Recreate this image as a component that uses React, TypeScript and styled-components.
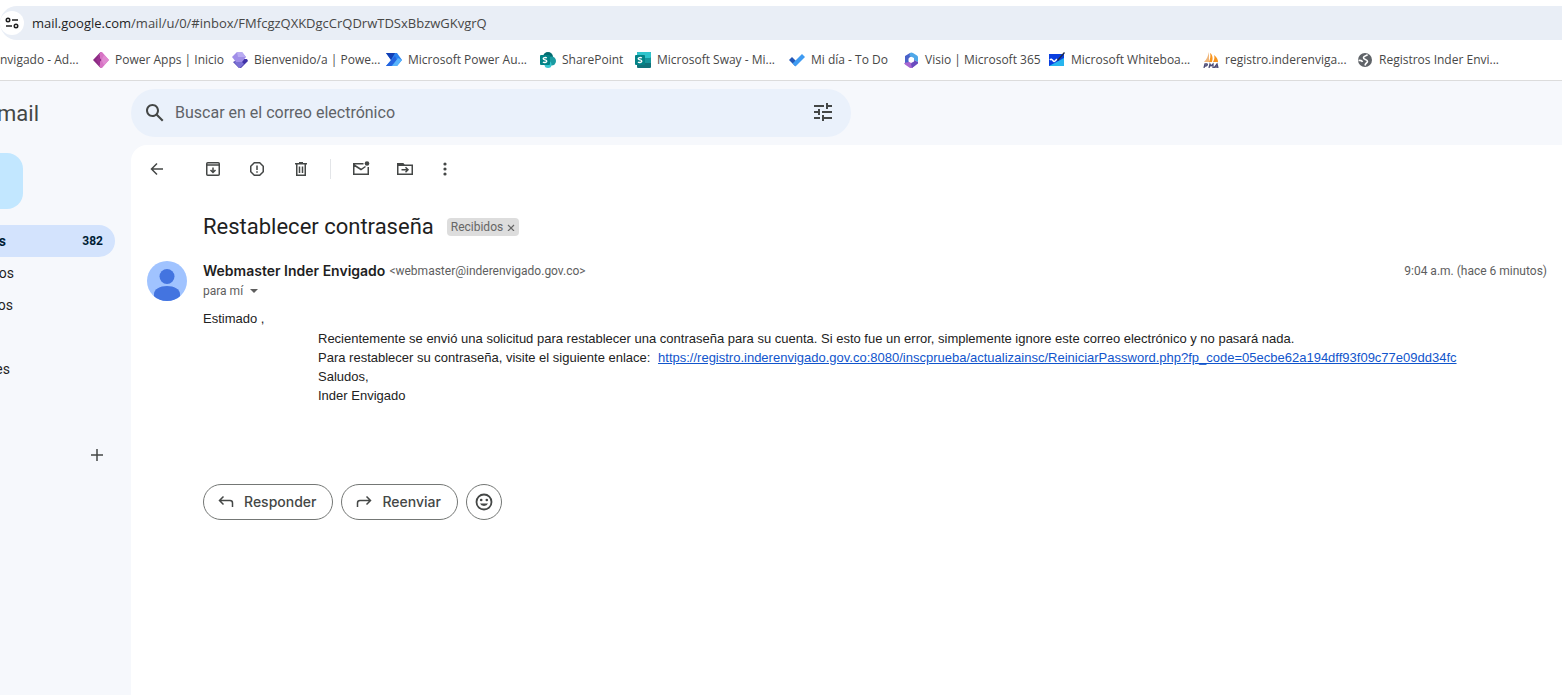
import React from "react";
import styled, { createGlobalStyle } from "styled-components";

const GlobalStyle = createGlobalStyle`
  *, *::before, *::after { box-sizing: border-box; }
  body {
    margin: 0;
    background: #f6f8fc;
    color: #1f1f1f;
    font-family: Roboto, "Liberation Sans", sans-serif;
    overflow-x: hidden;
  }
  button { font: inherit; color: inherit; border: 0; background: none; padding: 0; cursor: pointer; }
  svg { display: block; flex: none; }
  h1, h2, p { margin: 0; font-weight: 400; }
`;

const Page = styled.div`
  min-height: 100vh;
  display: flex;
  flex-direction: column;
`;

const BrowserBar = styled.header`
  background: #fff;
  padding-top: 6px;
  border-bottom: 1px solid #dcdcdc;
  font-family: "Open Sans", "Noto Sans", sans-serif;
`;

const AddressBar = styled.div`
  display: flex;
  align-items: center;
  height: 34px;
  background: #e9eef6;
  border-radius: 17px 0 0 17px;
`;

const SiteInfo = styled.button`
  width: 24px;
  height: 24px;
  border-radius: 12px;
  background: #fff;
  display: grid;
  place-items: center;
`;

const Address = styled.div`
  margin-left: 8px;
  font-size: 13px;
  line-height: 20px;
  color: #474747;
  white-space: nowrap;
  b { font-weight: 400; color: #1f1f1f; }
`;

const Bookmarks = styled.nav`
  display: flex;
  align-items: center;
  height: 40px;
  overflow: hidden;
`;

const Bookmark = styled.a<{ $width: number }>`
  display: flex;
  align-items: center;
  gap: 6px;
  flex: none;
  width: ${(p) => p.$width}px;
  font-size: 12px;
  line-height: 16px;
  color: #474747;
  text-decoration: none;
  white-space: nowrap;
`;

const Workspace = styled.div`
  flex: 1;
  display: grid;
  grid-template-columns: 131px minmax(0, 1fr);
  grid-template-rows: 64px 1fr;
`;

const Brand = styled.div`
  display: flex;
  align-items: center;
  justify-content: flex-end;
  width: 39px;
  padding-top: 2px;
  overflow: hidden;
  font-size: 22px;
  line-height: 24px;
  color: #444746;
`;

const SearchRow = styled.div`
  padding: 8px 0;
`;

const SearchBox = styled.form`
  display: flex;
  align-items: center;
  max-width: 720px;
  height: 48px;
  padding: 0 16px 0 12px;
  border-radius: 24px;
  background: #eaf1fb;
  color: #444746;
`;

const SearchInput = styled.input`
  flex: 1;
  min-width: 0;
  margin-left: 8px;
  border: 0;
  padding: 0;
  outline: 0;
  background: none;
  font: 16px/24px Roboto, "Liberation Sans", sans-serif;
  &::placeholder { color: #5f6368; opacity: 1; }
`;

const Sidebar = styled.aside`
  padding: 8px 16px 0 0;
`;

const Compose = styled.button`
  display: block;
  width: 23px;
  height: 56px;
  border-radius: 0 16px 16px 0;
  background: #c2e7ff;
`;

const Folders = styled.nav`
  margin-top: 16px;
`;

const Folder = styled.a<{ $active?: boolean }>`
  display: flex;
  align-items: center;
  justify-content: space-between;
  height: 32px;
  padding-right: 12px;
  border-radius: 0 16px 16px 0;
  background: ${(p) => (p.$active ? "#d3e3fd" : "transparent")};
  color: ${(p) => (p.$active ? "#001d35" : "#1f1f1f")};
  font-size: 14px;
  font-weight: ${(p) => (p.$active ? 700 : 400)};
  text-decoration: none;
`;

const FolderName = styled.span<{ $width: number }>`
  display: flex;
  justify-content: flex-end;
  width: ${(p) => p.$width}px;
  overflow: hidden;
`;

const Count = styled.span`
  font-size: 12px;
`;

const AddLabel = styled.button`
  display: block;
  margin: 60px 8px 0 auto;
  color: #444746;
`;

const Card = styled.main`
  background: #fff;
  border-top-left-radius: 16px;
`;

const Toolbar = styled.div`
  display: flex;
  align-items: center;
  height: 48px;
  padding-left: 16px;
  gap: 36px;
  color: #444746;
`;

const ToolGroup = styled.div`
  display: flex;
  align-items: center;
  gap: 24px;
`;

const Divider = styled.span`
  width: 1px;
  height: 20px;
  margin: 0 -4px 0 -5px;
  background: #e3e5e8;
`;

const TitleRow = styled.div`
  display: flex;
  align-items: center;
  gap: 13px;
  margin: 20px 0 0 72px;
  height: 28px;
`;

const Subject = styled.h1`
  font-size: 22px;
  line-height: 28px;
`;

const Label = styled.span`
  display: flex;
  align-items: center;
  gap: 4px;
  height: 18px;
  padding: 0 4px;
  border-radius: 4px;
  background: #ddd;
  color: #666;
  font-size: 12px;
`;

const Message = styled.article`
  display: grid;
  grid-template-columns: 40px minmax(0, 1fr);
  column-gap: 16px;
  padding: 20px 15px 0 16px;
`;

const SenderRow = styled.div`
  display: flex;
  align-items: center;
  gap: 4px;
  height: 20px;
  line-height: 20px;
  font-size: 12px;
  color: #5e5e5e;
  white-space: nowrap;
`;

const Sender = styled.h2`
  font: 600 14px/20px Inter, Roboto, sans-serif;
  color: #1f1f1f;
`;

const Time = styled.time`
  margin-left: auto;
`;

const Recipient = styled.button`
  display: flex;
  align-items: center;
  gap: 6px;
  height: 20px;
  font-size: 12px;
  color: #5e5e5e;
`;

const Body = styled.div`
  grid-column: 2;
  margin-top: 8px;
  font: 13px/19px "Liberation Sans", Arial, sans-serif;
  color: #222;
`;

const Indented = styled.div`
  padding: 1px 0 0 115px;
  a { color: #15c; margin-left: 4px; }
`;

const Actions = styled.div`
  display: flex;
  gap: 8px;
  margin: 79px 0 0 72px;
`;

const Pill = styled.button`
  display: flex;
  align-items: center;
  gap: 8px;
  height: 36px;
  padding: 0 16px 0 12px;
  border: 1px solid #747775;
  border-radius: 18px;
  color: #444746;
  font: 500 14px/20px Inter, Roboto, sans-serif;
`;

const RoundPill = styled(Pill)`
  width: 36px;
  padding: 0;
  justify-content: center;
`;

type IconProps = { children: React.ReactNode; size?: number; box?: number; line?: boolean };

const Icon = ({ children, size = 20, box = 20, line = true }: IconProps) => (
  <svg
    width={size}
    height={size}
    viewBox={`0 0 ${box} ${box}`}
    fill={line ? "none" : "currentColor"}
    stroke={line ? "currentColor" : "none"}
    strokeWidth={1.5}
    aria-hidden="true"
  >
    {children}
  </svg>
);

const PowerApps = () => (
  <Icon size={16} box={16} line={false}>
    <path d="M7.500 0 0 8l7.500 8L11 8z" fill="#8a2a82" />
    <path d="M7.500 0H9l7 8-7 8H7.500l-2-4.500L8.500 8l-3-3.500z" fill="#d773c4" />
    <path d="M7 2.500V14L3 8z" fill="#9a3090" />
    <path d="M11 3 8.500 8l2.500 5 5-5z" fill="#e08ad0" />
  </Icon>
);
const PowerPages = () => (
  <Icon size={16} box={16} line={false}>
    <path d="M8 7h7l1 2-7 7H7l-6-6z" fill="#4032a8" />
    <path d="M2 10l6-2 4 4-4 4H7z" fill="#7a70d4" />
    <path d="M5 0h5l4 5-4 5H4L0 5z" fill="#a08ee8" />
    <path d="M5 0h5l4 5H6z" fill="#b9abf2" />
  </Icon>
);
const PowerAutomate = () => (
  <Icon size={16} box={16} line={false}>
    <path d="M0 1h11l5 7-5 6H0l5-6z" fill="#2a82ee" />
    <path d="M0 1h9L5 8z" fill="#123fb5" />
    <path d="M0 14 9 4l2 4-6 6z" fill="#2463e0" />
    <path d="m6 14 6-8 4 2-5 6z" fill="#59b4fb" />
  </Icon>
);
const Tile = ({ round }: { round?: boolean }) => (
  <Icon size={16} box={16} line={false}>
    {round ? (
      <>
        <circle cx="8" cy="5" r="5" fill="#036c70" />
        <circle cx="11.500" cy="9" r="4.500" fill="#1a9ba1" />
        <circle cx="8" cy="12.500" r="3.500" fill="#37c6d0" />
      </>
    ) : (
      <>
        <rect x="2" width="14" height="16" rx="1" fill="#10727a" />
        <rect x="2" width="14" height="6" rx="1" fill="#2fc4cc" />
        <rect x="10" y="6" width="6" height="5" fill="#16969c" />
      </>
    )}
    <rect y="3" width="10" height="10" rx="1" fill="#038387" />
    <path
      d="M6.800 6C6 5.400 3.200 5.300 3.200 6.700c0 1.500 3.600.9 3.600 2.500 0 1.600-3 1.500-3.800.8"
      fill="none"
      stroke="#fff"
      strokeWidth="1.400"
    />
  </Icon>
);
const Todo = () => (
  <Icon size={16} box={16} line={false}>
    <path d="m0 8 3-3 6 6-3 3z" fill="#2458b8" />
    <path d="M3.500 11.500 13 2l3 3-9.500 9.500z" fill="#3f9bf2" />
  </Icon>
);
const M365 = () => (
  <Icon size={16} box={16} line={false}>
    <path d="M7 1 2 4v7l4 2.500V6l4-3z" fill="#4a62c9" />
    <path d="M7 1q1-1 3 0l4 2.500q1 .7 1 2V10l-4-2V6L6.500 4z" fill="#4fa8e8" />
    <path d="M1 11l5-1 7-1v3.500L9 16H7l-5-3.500z" fill="#a866d0" />
    <path d="m11 8 4 2v1.500L9 16l-1-4z" fill="#6a4bbf" />
    <path d="m8 5 3 1.500v3L8 11 5.500 9.500v-3z" fill="#fff" />
  </Icon>
);
const Whiteboard = () => (
  <Icon size={16} box={16} line={false}>
    <path d="M0 2h15v12H0z" fill="#0a3fe0" />
    <path d="M0 14 15 6v8z" fill="#28b5ee" />
    <path d="M1 8c2-3 3 3 5 1l2-2" fill="none" stroke="#fff" strokeWidth="1.500" />
    <path d="m8 8 7-8 1 1-7 8z" fill="#222b45" />
  </Icon>
);
const Pma = () => (
  <Icon size={16} box={16} line={false}>
    <path d="M6 0c-1 4-2 7-5 10h5z" fill="#f0b67a" />
    <path d="M7 1c3 2 3 6 2 9H6c1-3 2-6 1-9zM11 3c3 2 4 5 4 7h-5c1-2 2-4 1-7z" fill="#f7941d" />
    <path
      d="M1 16l1-4h2q1 1-1 2H2M6 16l1-4 1 2 2-2v4M11 16l3-4 1 4m-3-1h3"
      fill="none"
      stroke="#4b4b76"
      strokeWidth="1.300"
    />
  </Icon>
);
const Globe = () => (
  <Icon size={16} box={16} line={false}>
    <circle cx="8" cy="8" r="7" fill="#5f6368" />
    <path
      d="M10.500 2.500C10 4 7 3.500 6.500 5.500 6 8 10.500 7 10.500 9.500c0 1.500-2 1-2.500 4M1.500 8.500c2.500-.5 3.500 0 4 1.500"
      fill="none"
      stroke="#fff"
      strokeWidth="1.600"
    />
  </Icon>
);

const bookmarks: { text: string; icon: React.ReactNode; width: number }[] = [
  { text: "nvigado - Ad...", icon: null, width: 93 },
  { text: "Power Apps | Inicio", icon: <PowerApps />, width: 139 },
  { text: "Bienvenido/a | Powe...", icon: <PowerPages />, width: 154 },
  { text: "Microsoft Power Au...", icon: <PowerAutomate />, width: 154 },
  { text: "SharePoint", icon: <Tile round />, width: 95 },
  { text: "Microsoft Sway - Mi...", icon: <Tile />, width: 154 },
  { text: "Mi día - To Do", icon: <Todo />, width: 114 },
  { text: "Visio | Microsoft 365", icon: <M365 />, width: 146 },
  { text: "Microsoft Whiteboa...", icon: <Whiteboard />, width: 154 },
  { text: "registro.inderenviga...", icon: <Pma />, width: 154 },
  { text: "Registros Inder Envi...", icon: <Globe />, width: 154 },
];

const folders = [
  { name: "os", width: 14 },
  { name: "os", width: 13 },
  { name: "", width: 0 },
  { name: "es", width: 10 },
];

export default function App() {
  return (
    <Page>
      <GlobalStyle />
      <BrowserBar>
        <AddressBar>
          <SiteInfo aria-label="Información del sitio">
            <Icon size={14} box={14}>
              <circle cx="3" cy="4" r="1.750" />
              <path d="M7 4h6M1 10h6" />
              <circle cx="11" cy="10" r="1.750" />
            </Icon>
          </SiteInfo>
          <Address>
            <b>mail.google.com</b>/mail/u/0/#inbox/FMfcgzQXKDgcCrQDrwTDSxBbzwGKvgrQ
          </Address>
        </AddressBar>
        <Bookmarks>
          {bookmarks.map((b) => (
            <Bookmark key={b.text} href="#" $width={b.width}>
              {b.icon}
              {b.text}
            </Bookmark>
          ))}
        </Bookmarks>
      </BrowserBar>

      <Workspace>
        <Brand>mail</Brand>
        <SearchRow>
          <SearchBox role="search">
            <Icon size={24} box={24} line={false}>
              <path d="M20.490 19l-5.730-5.730C15.530 12.200 16 10.910 16 9.500 16 5.910 13.090 3 9.500 3S3 5.910 3 9.500 5.910 16 9.500 16c1.410 0 2.700-.470 3.770-1.240L19 20.490 20.490 19zM5 9.500C5 7.010 7.010 5 9.500 5S14 7.010 14 9.500 11.990 14 9.500 14 5 11.990 5 9.500z" />
            </Icon>
            <SearchInput
              aria-label="Buscar en el correo electrónico"
              placeholder="Buscar en el correo electrónico"
            />
            <button type="button" aria-label="Opciones de búsqueda">
              <Icon size={24} box={24} line={false}>
                <path d="M3 16v2h6v-2H3zM3 4v2h10V4H3zm10 16v-2h8v-2h-8v-2h-2v6h2zM7 8v2H3v2h4v2h2V8H7zm14 4v-2H11v2h10zm-6-4h2V6h4V4h-4V2h-2v6z" />
              </Icon>
            </button>
          </SearchBox>
        </SearchRow>

        <Sidebar>
          <Compose aria-label="Redactar" />
          <Folders>
            <Folder href="#" $active>
              <FolderName $width={6}>s</FolderName>
              <Count>382</Count>
            </Folder>
            {folders.map((folder, i) => (
              <Folder key={i} href="#">
                <FolderName $width={folder.width}>{folder.name}</FolderName>
              </Folder>
            ))}
          </Folders>
          <AddLabel aria-label="Crear etiqueta">
            <Icon>
              <path d="M10 4v12M4 10h12" />
            </Icon>
          </AddLabel>
        </Sidebar>

        <Card>
          <Toolbar>
            <button aria-label="Atrás">
              <Icon>
                <path d="M16 10H5M10 4.500 4.500 10l5.500 5.500" />
              </Icon>
            </button>
            <ToolGroup>
              <button aria-label="Archivar">
                <Icon>
                  <rect x="3.750" y="3.750" width="12.500" height="12.500" rx="1" />
                  <path d="M3.500 6h13M10 8.500v5M7.500 11 10 13.500l2.500-2.500" />
                </Icon>
              </button>
              <button aria-label="Marcar como spam">
                <Icon>
                  <path d="M7.300 3.750h5.400l3.550 3.550v5.400l-3.550 3.550H7.300L3.750 12.700V7.300zM10 6.500v4.500M10 12.300v1.500" />
                </Icon>
              </button>
              <button aria-label="Eliminar">
                <Icon>
                  <path d="M4 4.750h12M8 3.750h4M5.750 5v11.250h8.500V5M8.500 7.500v6.500M11.500 7.500v6.500" />
                </Icon>
              </button>
              <Divider />
              <button aria-label="Marcar como no leído">
                <Icon>
                  <path d="M12.500 4.750H2.750v10.500h14.500V8M3 6l7 4.500L14.500 7.500" />
                  <circle cx="16" cy="4.500" r="2.300" fill="currentColor" stroke="none" />
                </Icon>
              </button>
              <button aria-label="Mover a">
                <Icon>
                  <path d="M2.750 4.750h5l1.500 1.500h8v9H2.750zM6.500 10.700h6M10.500 8.200l2.500 2.500-2.500 2.500" />
                  <path d="M2.500 4h5.500l2.500 3H2.500z" fill="currentColor" stroke="none" />
                </Icon>
              </button>
              <button aria-label="Más">
                <Icon line={false}>
                  <circle cx="6" cy="5" r="1.600" />
                  <circle cx="6" cy="10" r="1.600" />
                  <circle cx="6" cy="15" r="1.600" />
                </Icon>
              </button>
            </ToolGroup>
          </Toolbar>

          <TitleRow>
            <Subject>Restablecer contraseña</Subject>
            <Label>
              Recibidos
              <button aria-label="Quitar etiqueta">
                <Icon size={8} box={8}>
                  <path d="M1 2l6 6M7 2 1 8" strokeWidth="1.200" />
                </Icon>
              </button>
            </Label>
          </TitleRow>

          <Message>
            <svg width="40" height="40" viewBox="0 0 40 40" role="img" aria-label="Foto de perfil">
              <clipPath id="avatar">
                <circle cx="20" cy="20" r="20" />
              </clipPath>
              <g clipPath="url(#avatar)">
                <path d="M0 0h40v40H0z" fill="#a0c3ff" />
                <circle cx="20" cy="15.500" r="7.500" fill="#4374e0" />
                <path d="M7 40v-7c0-5 6-8 13-8s13 3 13 8v7z" fill="#4374e0" />
              </g>
            </svg>
            <div>
              <SenderRow>
                <Sender>Webmaster Inder Envigado</Sender>
                <span>&lt;webmaster@inderenvigado.gov.co&gt;</span>
                <Time>9:04 a.m. (hace 6 minutos)</Time>
              </SenderRow>
              <Recipient>
                para mí
                <Icon size={10} box={10} line={false}>
                  <path d="M1 3h8L5 7z" />
                </Icon>
              </Recipient>
            </div>
            <Body>
              <p>Estimado ,</p>
              <Indented>
                <p>
                  Recientemente se envió una solicitud para restablecer una contraseña para su cuenta. Si esto
                  fue un error, simplemente ignore este correo electrónico y no pasará nada.
                </p>
                <p>
                  Para restablecer su contraseña, visite el siguiente enlace:{" "}
                  <a href="#">
                    https://registro.inderenvigado.gov.co:8080/inscprueba/actualizainsc/ReiniciarPassword.php?fp_code=05ecbe62a194dff93f09c77e09dd34fc
                  </a>
                </p>
                <p>Saludos,</p>
                <p>Inder Envigado</p>
              </Indented>
            </Body>
          </Message>

          <Actions>
            <Pill>
              <Icon>
                <path d="M7.500 4.500 3.500 8.500l4 4M3.500 8.500H14a2.500 2.500 0 0 1 2.500 2.500v4" />
              </Icon>
              Responder
            </Pill>
            <Pill>
              <Icon>
                <path d="m12.500 4.500 4 4-4 4M16.500 8.500H6A2.500 2.500 0 0 0 3.500 11v4" />
              </Icon>
              Reenviar
            </Pill>
            <RoundPill aria-label="Agregar reacción">
              <Icon>
                <circle cx="10" cy="10" r="7.500" strokeWidth="1.800" />
                <circle cx="7.200" cy="8" r="1.300" fill="currentColor" stroke="none" />
                <circle cx="12.800" cy="8" r="1.300" fill="currentColor" stroke="none" />
                <path d="M6 11.500h8a4.200 3.500 0 0 1-8 0z" fill="currentColor" stroke="none" />
              </Icon>
            </RoundPill>
          </Actions>
        </Card>
      </Workspace>
    </Page>
  );
}
